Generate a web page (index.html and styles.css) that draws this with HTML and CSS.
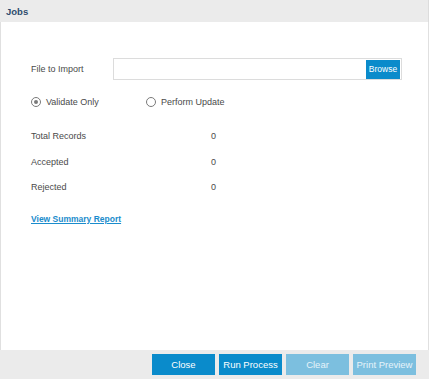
FILE: index.html
```html
<!DOCTYPE html>
<html lang="en">

<head>
    <meta charset="UTF-8">
    <meta name="viewport" content="width=device-width, initial-scale=1.0">
    <title>Jobs</title>
    <link rel="stylesheet" href="styles.css">
</head>

<body>
    <div class="dialog">
        <div class="header">Jobs</div>

        <div class="content">
            <div class="file-row">
                <label class="label" for="file">File to Import</label>
                <div class="file-box">
                    <input id="file" type="text">
                    <button class="browse" type="button">Browse</button>
                </div>
            </div>

            <div class="radios">
                <label class="radio"><span class="dot checked"></span>Validate Only</label>
                <label class="radio"><span class="dot"></span>Perform Update</label>
            </div>

            <div class="stats">
                <div class="stat"><span class="label">Total Records</span><span class="value">0</span></div>
                <div class="stat"><span class="label">Accepted</span><span class="value">0</span></div>
                <div class="stat"><span class="label">Rejected</span><span class="value">0</span></div>
            </div>

            <a class="report" href="#">View Summary Report</a>
        </div>

        <div class="footer">
            <button class="btn" type="button">Close</button>
            <button class="btn" type="button">Run Process</button>
            <button class="btn disabled" type="button">Clear</button>
            <button class="btn disabled" type="button">Print Preview</button>
        </div>
    </div>
</body>

</html>
```

FILE: styles.css
```css
body {
    margin: 0;
    font-family: "Liberation Sans", Arial, sans-serif;
    font-size: 9px;
    color: #4a4a4a;
}

.dialog {
    width: 429px;
    height: 379px;
    display: flex;
    flex-direction: column;
}

.header {
    height: 22px;
    line-height: 24px;
    padding-left: 6px;
    background-color: #ebebeb;
    border-right: 1px solid #dcdcdc;
    color: #2e4b6d;
    font-weight: bold;
    font-size: 9.5px;
}

.content {
    flex: 1;
    border-left: 1px solid #e0e0e0;
    border-right: 1px solid #e0e0e0;
    padding: 36px 0 0 30px;
}

.file-row {
    display: flex;
    align-items: center;
}

.label {
    width: 82px;
}

.file-box {
    width: 286px;
    height: 20px;
    border: 1px solid #dcdcdc;
    display: flex;
    align-items: center;
    padding-right: 1px;
}

.file-box input {
    flex: 1;
    border: none;
    outline: none;
    height: 18px;
    padding: 0;
}

.browse {
    height: 19px;
    width: 34px;
    border: none;
    padding: 0;
    background-color: #0a8bcb;
    color: #fff;
    font-family: inherit;
    font-size: 8.5px;
}

.radios {
    display: flex;
    margin-top: 17px;
}

.radio {
    display: flex;
    align-items: center;
    width: 115px;
}

.dot {
    width: 8px;
    height: 8px;
    border: 1px solid #7a7a7a;
    border-radius: 50%;
    margin-right: 5px;
    display: flex;
    align-items: center;
    justify-content: center;
}

.dot.checked::after {
    content: "";
    width: 4px;
    height: 4px;
    border-radius: 50%;
    background-color: #7a7a7a;
}

.stats {
    margin-top: 24px;
}

.stat {
    display: flex;
    height: 25.5px;
}

.stat .label {
    width: 180px;
}

.report {
    display: inline-block;
    margin-top: 6px;
    color: #1a8ccc;
    font-weight: bold;
    font-size: 8.5px;
}

.footer {
    height: 29px;
    background-color: #ebebeb;
    display: flex;
    justify-content: flex-end;
    align-items: flex-start;
    gap: 4px;
    padding: 4px 13px 0 0;
    box-sizing: border-box;
}

.btn {
    width: 63px;
    height: 21px;
    border: none;
    padding: 0;
    background-color: #0a8bcb;
    color: #fff;
    font-family: inherit;
    font-size: 9.5px;
}

.btn.disabled {
    background-color: #7cbfdf;
    color: #e6f3fa;
}
```
